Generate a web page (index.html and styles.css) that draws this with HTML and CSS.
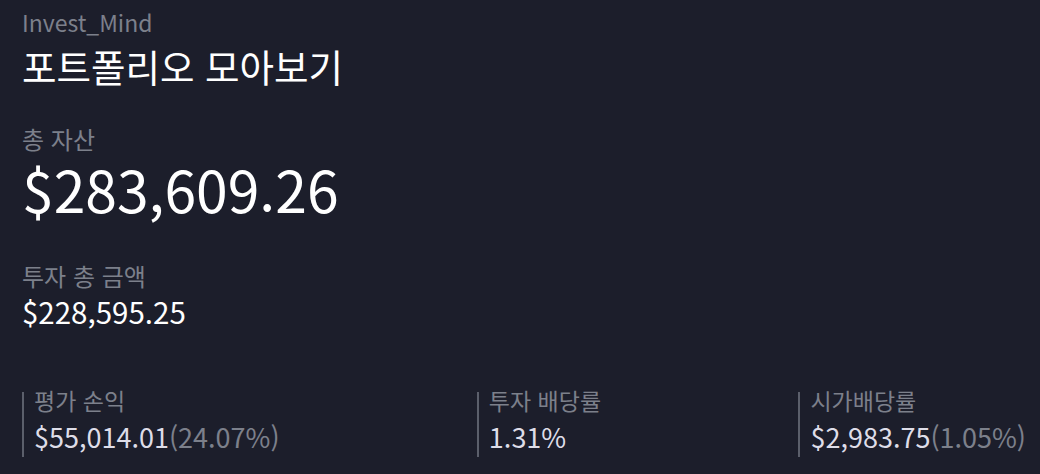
FILE: index.html
```html
<!DOCTYPE html>
<html lang="ko">
<head>
<meta charset="utf-8">
<title>Invest_Mind</title>
<link rel="stylesheet" href="styles.css">
</head>
<body>
<main class="page">
  <header class="head">
    <div class="brand">Invest_Mind</div>
    <h1 class="title">포트폴리오 모아보기</h1>
  </header>
  <section class="total">
    <div class="label">총 자산</div>
    <div class="big">$283,609.26</div>
  </section>
  <section class="invested">
    <div class="label">투자 총 금액</div>
    <div class="mid">$228,595.25</div>
  </section>
  <section class="stats">
    <div class="stat">
      <div class="stat-label">평가 손익</div>
      <div class="stat-value">$55,014.01<span class="pct">(24.07%)</span></div>
    </div>
    <div class="stat">
      <div class="stat-label">투자 배당률</div>
      <div class="stat-value">1.31%</div>
    </div>
    <div class="stat">
      <div class="stat-label">시가배당률</div>
      <div class="stat-value">$2,983.75<span class="pct">(1.05%)</span></div>
    </div>
  </section>
</main>
</body>
</html>
```
FILE: styles.css
```css
html, body {
  margin: 0;
  padding: 0;
  background: #1c1e2b;
}
body {
  font-family: "Noto Sans CJK KR", "Noto Sans", sans-serif;
  color: #ffffff;
}
.page {
  width: 1040px;
  height: 474px;
  box-sizing: border-box;
  padding: 7px 14px 0 22px;
  display: flex;
  flex-direction: column;
}
.brand {
  font-size: 23px;
  line-height: 30px;
  color: #7c808b;
}
.title {
  margin: 5px 0 0;
  font-size: 37.5px;
  font-weight: 400;
  line-height: 48px;
  color: #ffffff;
}
.total {
  margin-top: 33px;
}
.label {
  font-size: 24px;
  line-height: 32px;
  color: #7c808b;
}
.big {
  font-size: 57px;
  line-height: 66px;
  color: #ffffff;
}
.invested {
  margin-top: 39px;
}
.mid {
  font-size: 29.5px;
  line-height: 38px;
  color: #ffffff;
}
.stats {
  margin-top: 62px;
  display: flex;
  justify-content: space-between;
}
.stat {
  border-left: 2px solid #5b5f6b;
  padding-left: 10px;
}
.stat-label {
  font-size: 23px;
  line-height: 17px;
  color: #7c808b;
}
.stat-value {
  margin-top: 7px;
  font-size: 27px;
  line-height: 41px;
  color: #dedde8;
}
.pct {
  color: #7c808b;
}
```
